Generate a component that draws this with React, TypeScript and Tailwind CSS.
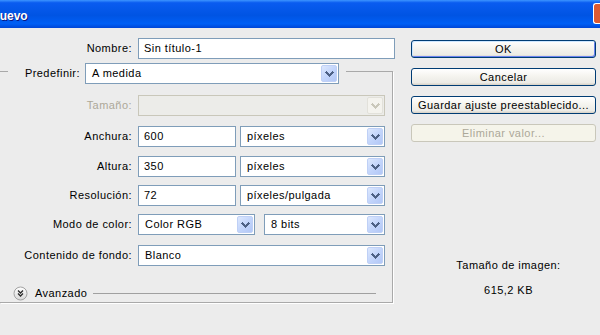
import React from "react";

// Windows XP style "Nuevo" dialog (Photoshop new document), cropped on the left

const font = "font-['Liberation_Sans',Arial,sans-serif] text-[11px] tracking-[0.45px]";

function Chevron({ disabled = false }: { disabled?: boolean }) {
  return (
    <svg width="9" height="6" viewBox="0 0 9 6" shapeRendering="crispEdges">
      <path
        d="M1 1 L4.5 4.5 L8 1"
        fill="none"
        stroke={disabled ? "#c9c7ba" : "#4d6185"}
        strokeWidth="2"
      />
    </svg>
  );
}

function TextBox({ value, width }: { value: string; width: string }) {
  return (
    <div
      className={`${width} h-[21px] shrink-0 border border-[#7f9db9] bg-white pl-[5px] flex items-center text-black`}
    >
      {value}
    </div>
  );
}

function Combo({
  value,
  width,
  disabled = false,
}: {
  value: string;
  width: string;
  disabled?: boolean;
}) {
  return (
    <div
      className={`${width} h-[21px] shrink-0 border flex items-stretch p-[1px] ${
        disabled ? "border-[#c9c7ba] bg-[#ecece9]" : "border-[#7f9db9] bg-white"
      }`}
    >
      <div className="flex-1 flex items-center pl-[5px] text-black">{value}</div>
      <div
        className={`w-[16px] ml-[1px] flex items-center justify-center rounded-[2px] border ${
          disabled
            ? "border-[#e2e1da] bg-[#f4f3ee]"
            : "border-[#bfd0f6] bg-[linear-gradient(135deg,#dde8fd_0%,#c3d5fb_50%,#b2c7f6_100%)]"
        }`}
      >
        <Chevron disabled={disabled} />
      </div>
    </div>
  );
}

function XpButton({
  label,
  isDefault = false,
  disabled = false,
}: {
  label: string;
  isDefault?: boolean;
  disabled?: boolean;
}) {
  if (disabled) {
    return (
      <div className="h-[18px] w-[185px] rounded-[3px] border border-[#c9c7ba] bg-[#f5f4ea] flex items-center justify-center text-[#aca899]">
        {label}
      </div>
    );
  }
  return (
    <div
      className={`h-[18px] w-[185px] rounded-[3px] border border-[#003c74] bg-[linear-gradient(to_bottom,#ffffff_0%,#f5f4ef_45%,#ecebe6_85%,#d6d0c5_100%)] flex items-center justify-center text-black ${
        isDefault ? "shadow-[inset_1px_1px_0_#cee7ff,inset_-1px_-1px_0_#6982ee]" : ""
      }`}
    >
      {label}
    </div>
  );
}

function Row({
  label,
  mt,
  disabled = false,
  children,
}: {
  label: string;
  mt: string;
  disabled?: boolean;
  children: React.ReactNode;
}) {
  return (
    <div className={`flex items-center h-[21px] ${mt}`}>
      <div
        className={`w-[132px] shrink-0 text-right ${disabled ? "text-[#aca899]" : "text-black"}`}
      >
        {label}
      </div>
      <div className="ml-[6px] flex items-center">{children}</div>
    </div>
  );
}

export default function App() {
  return (
    <div className={`w-[600px] h-[335px] overflow-hidden bg-[#ececec] ${font}`}>
      {/* Title bar */}
      <div className="h-[28px] flex items-start bg-[linear-gradient(to_bottom,#3d95ff_0%,#0a5cf0_10%,#0054e3_55%,#005ff5_85%,#0046d6_100%)]">
        <span className="-ml-[9px] mt-[9px] text-[12px] font-bold tracking-normal text-white leading-[15px] [text-shadow:1px_1px_0_#0a1883]">
          Nuevo
        </span>
        <div className="ml-auto mt-[3px] w-[7px] h-[21px] rounded-l-[3px] border border-r-0 border-white bg-[#dd5a32]" />
      </div>

      <div className="flex">
        {/* Left column */}
        <div className="w-[396px] shrink-0 pt-[10px]">
          <Row label="Nombre:" mt="mt-0">
            <TextBox value="Sin título-1" width="w-[257px]" />
          </Row>

          {/* Group box */}
          <div className="mt-[12px] w-[393px] h-[232px] border-t border-r border-b border-[#a9a9a9] shadow-[1px_1px_0_#ffffff]">
            <div className="-mt-[9px] flex">
              <div className="ml-[8px] pr-[7px] flex items-center bg-[#ececec] h-[21px]">
                <div className="w-[72px] text-right text-black">Predefinir:</div>
                <div className="ml-[5px]">
                  <Combo value="A medida" width="w-[254px]" />
                </div>
              </div>
            </div>

            <Row label="Tamaño:" mt="mt-[11px]" disabled>
              <Combo value="" width="w-[247px]" disabled />
            </Row>
            <Row label="Anchura:" mt="mt-[10px]">
              <TextBox value="600" width="w-[98px]" />
              <div className="ml-[4px]">
                <Combo value="píxeles" width="w-[145px]" />
              </div>
            </Row>
            <Row label="Altura:" mt="mt-[9px]">
              <TextBox value="350" width="w-[98px]" />
              <div className="ml-[4px]">
                <Combo value="píxeles" width="w-[145px]" />
              </div>
            </Row>
            <Row label="Resolución:" mt="mt-[8px]">
              <TextBox value="72" width="w-[98px]" />
              <div className="ml-[4px]">
                <Combo value="píxeles/pulgada" width="w-[145px]" />
              </div>
            </Row>
            <Row label="Modo de color:" mt="mt-[8px]">
              <Combo value="Color RGB" width="w-[117px]" />
              <div className="ml-[9px]">
                <Combo value="8 bits" width="w-[121px]" />
              </div>
            </Row>
            <Row label="Contenido de fondo:" mt="mt-[10px]">
              <Combo value="Blanco" width="w-[247px]" />
            </Row>

            {/* Avanzado */}
            <div className="mt-[20px] h-[15px] flex items-center">
              <svg width="15" height="15" viewBox="0 0 15 15" className="ml-[13px]">
                <defs>
                  <linearGradient id="adv" x1="0" y1="0" x2="0" y2="1">
                    <stop offset="0" stopColor="#ffffff" />
                    <stop offset="1" stopColor="#d8d8d8" />
                  </linearGradient>
                </defs>
                <circle cx="7.5" cy="7.5" r="6.5" fill="url(#adv)" stroke="#a3a3a3" />
                <path
                  d="M5 4.5 L7.5 7 L10 4.5 M5 7.5 L7.5 10 L10 7.5"
                  fill="none"
                  stroke="#2b2b2b"
                  strokeWidth="1.3"
                />
              </svg>
              <span className="ml-[7px] text-black">Avanzado</span>
              <div className="ml-[6px] w-[283px] h-px bg-[#a0a0a0]" />
            </div>
          </div>
        </div>

        {/* Right column */}
        <div className="ml-[15px] pt-[12px] w-[185px] flex flex-col">
          <div className="flex flex-col gap-[10px]">
            <XpButton label="OK" isDefault />
            <XpButton label="Cancelar" />
            <XpButton label="Guardar ajuste preestablecido..." />
            <XpButton label="Eliminar valor..." disabled />
          </div>
          <div className="mt-[117px] pl-[10px] flex flex-col items-center text-black leading-[13px]">
            <div>Tamaño de imagen:</div>
            <div className="mt-[12px]">615,2 KB</div>
          </div>
        </div>
      </div>
    </div>
  );
}
